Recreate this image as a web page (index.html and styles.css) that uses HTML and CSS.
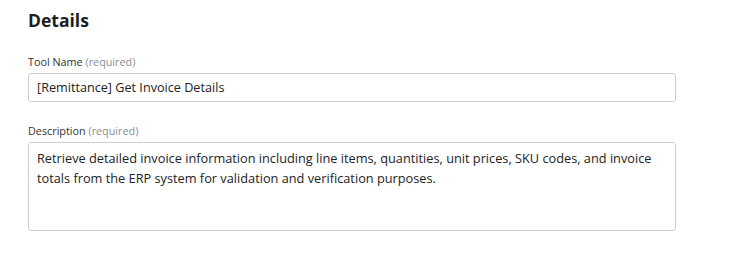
FILE: index.html
```html
<!DOCTYPE html>
<html>
<head>
<meta charset="utf-8">
<link rel="stylesheet" href="styles.css">
</head>
<body>
<section class="panel">
  <h2 class="title">Details</h2>
  <div class="field">
    <label class="label">Tool Name <span class="hint">(required)</span></label>
    <div class="input">[Remittance] Get Invoice Details</div>
  </div>
  <div class="field">
    <label class="label">Description <span class="hint">(required)</span></label>
    <div class="textarea">Retrieve detailed invoice information including line items, quantities, unit prices, SKU codes, and invoice totals from the ERP system for validation and verification purposes.</div>
  </div>
</section>
</body>
</html>
```
FILE: styles.css
```css
* { box-sizing: border-box; }
html, body { margin: 0; padding: 0; background: #fff; }
body { font-family: "Open Sans", "Noto Sans", sans-serif; color: #1f1f1f; }
.panel { padding: 8px 55px 0 28px; display: flex; flex-direction: column; }
.title { margin: 0 0 22px; font-size: 17.5px; font-weight: 700; line-height: 24px; color: #1e1e1e; }
.field { display: flex; flex-direction: column; margin-bottom: 21px; }
.label { font-size: 10.8px; line-height: 15px; color: #333; margin-bottom: 4px; }
.hint { color: #8a8f98; }
.input { height: 29px; border: 1px solid #cfcfcf; border-radius: 3px; padding: 0 8px; font-size: 12.65px; line-height: 27px; color: #222; }
.textarea { height: 89px; border: 1px solid #cfcfcf; border-radius: 3px; padding: 5px 8px; font-size: 12.75px; line-height: 20px; color: #222; }
```
